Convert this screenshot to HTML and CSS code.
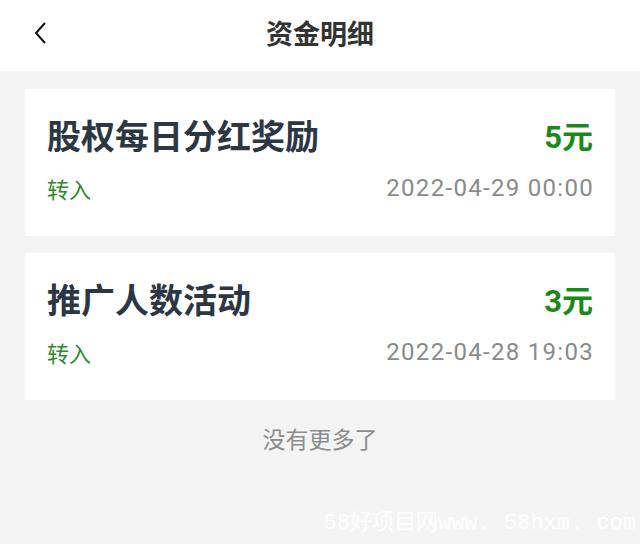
FILE: index.html
```html
<!DOCTYPE html>
<html>
<head>
	<meta charset="utf-8">
	<link rel="stylesheet" href="styles.css">
</head>
<body>
	<div class="header">
		<svg class="back" width="16" height="24" viewBox="0 0 16 24">
			<polyline points="12,2 3,12 12,22" fill="none" stroke="#111" stroke-width="2"/>
		</svg>
		<h1>资金明细</h1>
	</div>
	<div class="list">
		<div class="card">
			<div class="row">
				<span class="title">股权每日分红奖励</span>
				<span class="amount">5元</span>
			</div>
			<div class="row sub">
				<span class="type">转入</span>
				<span class="date">2022-04-29 00:00</span>
			</div>
		</div>
		<div class="card">
			<div class="row">
				<span class="title">推广人数活动</span>
				<span class="amount">3元</span>
			</div>
			<div class="row sub">
				<span class="type">转入</span>
				<span class="date">2022-04-28 19:03</span>
			</div>
		</div>
		<p class="end">没有更多了</p>
	</div>
	<div class="mark">58好项目网www. 58hxm. com</div>
</body>
</html>
```

FILE: styles.css
```css
html, body {
	margin: 0;
	padding: 0;
	height: 100%;
	background-color: #f4f4f4;
	font-family: Roboto, "Noto Sans CJK SC", sans-serif;
}
.header {
	height: 71px;
	background-color: #fff;
	display: flex;
	align-items: center;
	justify-content: center;
	position: relative;
}
.header h1 {
	margin: 0;
	font-size: 27px;
	font-weight: bold;
	color: #333;
	margin-top: -6px;
}
.back {
	position: absolute;
	left: 33px;
	top: 21px;
}
.list {
	padding: 18px 25px 0 25px;
	display: flex;
	flex-direction: column;
	gap: 17px;
}
.card {
	background-color: #fff;
	height: 147px;
	box-sizing: border-box;
	padding: 25px 22px 0 22px;
}
.row {
	display: flex;
	justify-content: space-between;
	align-items: center;
	height: 40px;
}
.row.sub {
	height: 30px;
	margin-top: 19px;
}
.title {
	font-size: 34px;
	font-weight: bold;
	color: #2d3643;
}
.amount {
	font-size: 31px;
	font-weight: bold;
	color: #178a17;
}
.type {
	font-size: 22px;
	color: #2b8a2b;
}
.date {
	font-size: 24px;
	letter-spacing: 1.3px;
	margin-right: -1px;
	color: #8a8a8a;
}
.end {
	margin: 9px 0 0 0;
	text-align: center;
	font-size: 23px;
	line-height: 30px;
	color: #8c8c8c;
}
.mark {
	position: absolute;
	right: 4px;
	bottom: 8px;
	color: #fff;
	font-size: 22px;
	font-family: "Liberation Mono", "Noto Sans CJK SC", monospace;
}
```
